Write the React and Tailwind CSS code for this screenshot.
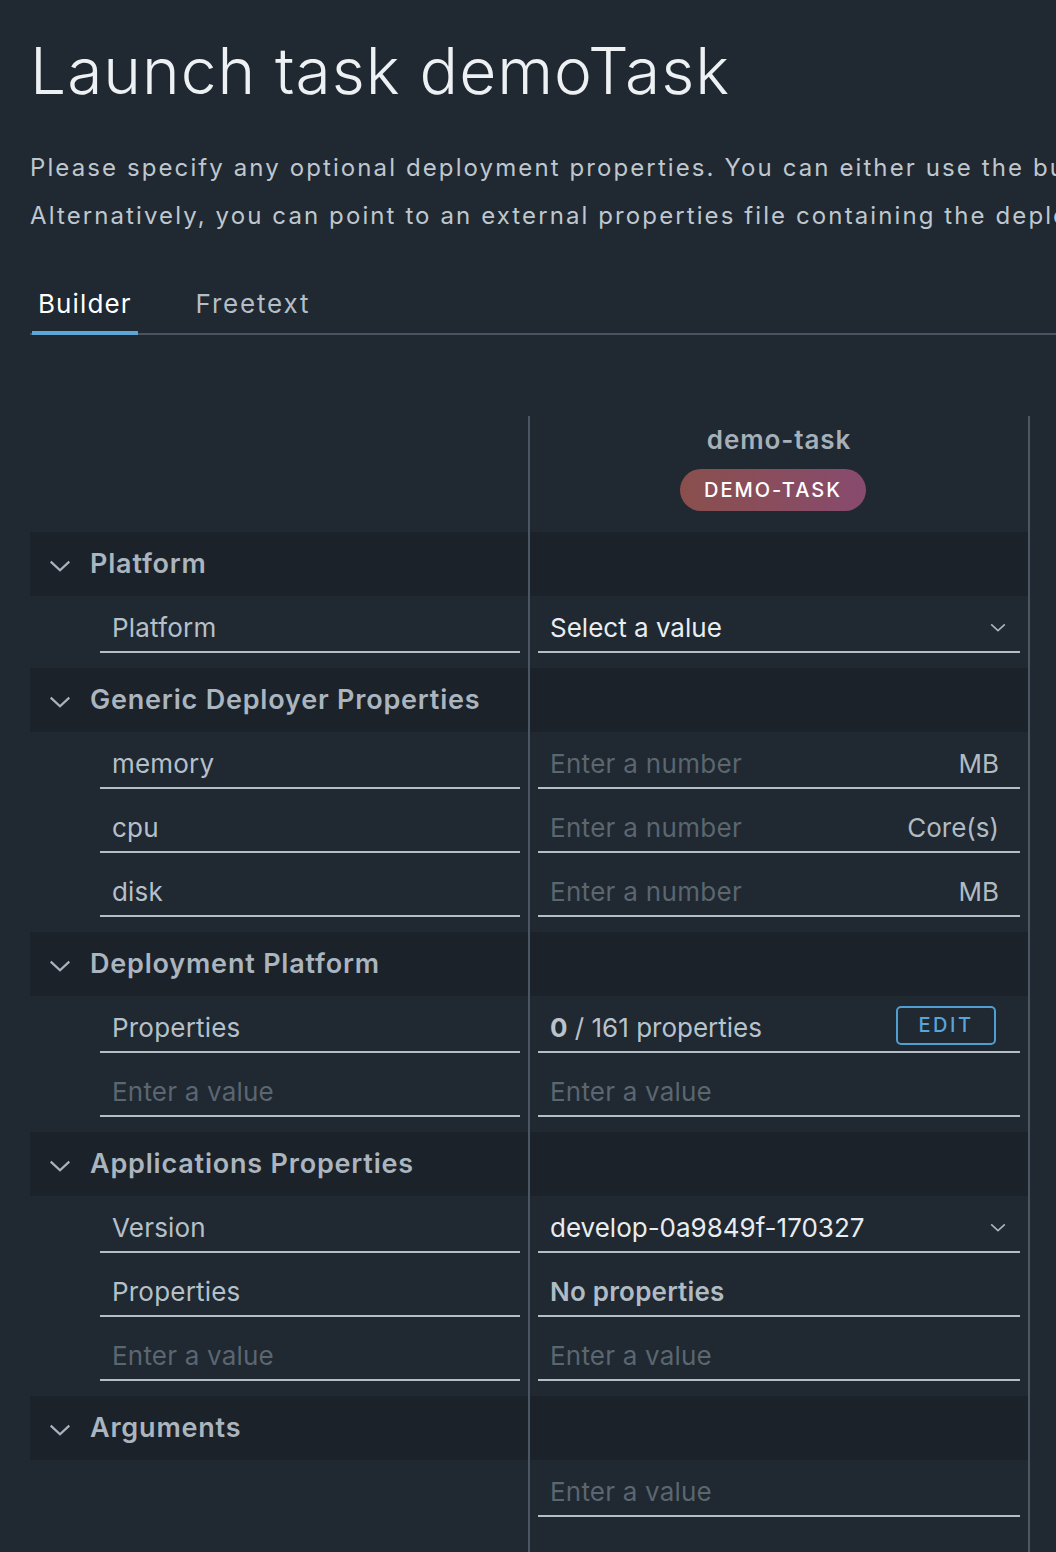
import React from "react";

function Chevron({ className = "" }) {
  return (
    <svg viewBox="0 0 20 11" className={className} fill="none">
      <polyline points="1.5,1.5 10,9.5 18.5,1.5" stroke="currentColor" strokeWidth="2" />
    </svg>
  );
}

function Row({ left, right, className = "" }) {
  return (
    <div className={"flex " + className}>
      <div className="w-[498px] shrink-0">{left}</div>
      <div className="w-[502px] shrink-0 border-x-2 border-[#4b5664]">{right}</div>
    </div>
  );
}

function GroupHeader({ title }) {
  return (
    <Row
      className="h-16"
      left={
        <div className="h-16 bg-[#1c2229] flex items-center pl-[19px] gap-[19px]">
          <Chevron className="w-[22px] h-[12px] text-[#a9b4be] mt-[3px]" />
          <span className="text-[27px] font-semibold tracking-[0.8px] text-[#aab5bf]">{title}</span>
        </div>
      }
      right={<div className="h-16 bg-[#1c2229]" />}
    />
  );
}

function Field({ children, className = "" }) {
  return (
    <div className={"h-[57px] border-b-2 border-[#b3bec7] flex items-center pt-[7px] pl-3 " + className}>
      {children}
    </div>
  );
}

function LabelCell({ text, muted }) {
  return (
    <div className="h-16 pl-[70px] pr-[8px]">
      <Field>
        <span className={"text-[26px] tracking-[0.2px] " + (muted ? "text-[#5a6670]" : "text-[#b5c0c9]")}>{text}</span>
      </Field>
    </div>
  );
}

function ValueCell({ children }) {
  return <div className="h-16 px-[8px]">{children}</div>;
}

function Spacer() {
  return <Row className="h-2" left={<div />} right={<div className="h-2" />} />;
}

function SelectField({ value }) {
  return (
    <Field className="pr-[14px] justify-between">
      <span className="text-[26px] text-[#e9edf0]">{value}</span>
      <Chevron className="w-[16px] h-[9px] text-[#a9b4be]" />
    </Field>
  );
}

function NumberField({ unit }) {
  return (
    <Field className="pr-[21px] justify-between">
      <span className="text-[26px] tracking-[0.3px] text-[#5a6670]">Enter a number</span>
      <span className="text-[26px] text-[#b0bbc4]">{unit}</span>
    </Field>
  );
}

function EmptyField() {
  return (
    <Field>
      <span className="text-[26px] tracking-[0.2px] text-[#5a6670]">Enter a value</span>
    </Field>
  );
}

export default function App() {
  return (
    <div className="min-h-screen bg-[#202831] overflow-hidden font-['Inter',sans-serif]">
      <div className="pl-[30px] pt-[39px]">
        <h1 className="text-[64px] leading-[64px] font-light text-[#eef1f3] tracking-[1px]">
          Launch task demoTask
        </h1>

        <div className="mt-[41px] text-[24px] leading-[48px] tracking-[2.1px] text-[#bfc7ce] whitespace-nowrap">
          <p>Please specify any optional deployment properties. You can either use the builder or the freetext editor.</p>
          <p>Alternatively, you can point to an external properties file containing the deployment properties.</p>
        </div>

        <div className="mt-[48px] flex gap-[52px] border-b-2 border-[#4a5461] pl-[2px]">
          <div className="px-[6px] pb-[11px] border-b-4 border-[#5ea6d6] -mb-[2px]">
            <span className="text-[26px] leading-[32px] tracking-[1.1px] text-white">Builder</span>
          </div>
          <div className="px-[6px] pb-[11px]">
            <span className="text-[26px] leading-[32px] tracking-[1.8px] text-[#b4bec7]">Freetext</span>
          </div>
        </div>

        <div className="mt-[81px]">
          <Row
            className="h-[116px]"
            left={<div />}
            right={
              <div className="h-[116px] flex flex-col items-center pt-[9px]">
                <span className="text-[26px] leading-[30px] font-semibold tracking-[0.9px] text-[#a5b0b9]">demo-task</span>
                <span className="mt-[14px] mr-[12px] h-[42px] px-[24px] rounded-full bg-gradient-to-r from-[#8a4f4c] to-[#884a6e] flex items-center text-[20px] font-medium tracking-[2px] text-white">
                  DEMO-TASK
                </span>
              </div>
            }
          />

          <GroupHeader title="Platform" />
          <Row
            left={<LabelCell text="Platform" />}
            right={
              <ValueCell>
                <SelectField value="Select a value" />
              </ValueCell>
            }
          />
          <Spacer />

          <GroupHeader title="Generic Deployer Properties" />
          <Row left={<LabelCell text="memory" />} right={<ValueCell><NumberField unit="MB" /></ValueCell>} />
          <Row left={<LabelCell text="cpu" />} right={<ValueCell><NumberField unit="Core(s)" /></ValueCell>} />
          <Row left={<LabelCell text="disk" />} right={<ValueCell><NumberField unit="MB" /></ValueCell>} />
          <Spacer />

          <GroupHeader title="Deployment Platform" />
          <Row
            left={<LabelCell text="Properties" />}
            right={
              <ValueCell>
                <Field className="pr-[24px] justify-between">
                  <span className="text-[26px] text-[#b9c3cb]">
                    <span className="font-bold">0</span> / 161 properties
                  </span>
                  <button className="h-[39px] w-[100px] -mt-[4px] border-2 border-[#4f9fd2] rounded-[5px] text-[20px] font-medium tracking-[2.5px] text-[#57a6d8]">
                    EDIT
                  </button>
                </Field>
              </ValueCell>
            }
          />
          <Row left={<LabelCell text="Enter a value" muted />} right={<ValueCell><EmptyField /></ValueCell>} />
          <Spacer />

          <GroupHeader title="Applications Properties" />
          <Row
            left={<LabelCell text="Version" />}
            right={
              <ValueCell>
                <SelectField value="develop-0a9849f-170327" />
              </ValueCell>
            }
          />
          <Row
            left={<LabelCell text="Properties" />}
            right={
              <ValueCell>
                <Field>
                  <span className="text-[26px] font-semibold tracking-[0.2px] text-[#b0bbc4]">No properties</span>
                </Field>
              </ValueCell>
            }
          />
          <Row left={<LabelCell text="Enter a value" muted />} right={<ValueCell><EmptyField /></ValueCell>} />
          <Spacer />

          <GroupHeader title="Arguments" />
          <Row left={<div />} right={<ValueCell><EmptyField /></ValueCell>} />
          <Row className="h-[100px]" left={<div />} right={<div className="h-[100px]" />} />
        </div>
      </div>
    </div>
  );
}
